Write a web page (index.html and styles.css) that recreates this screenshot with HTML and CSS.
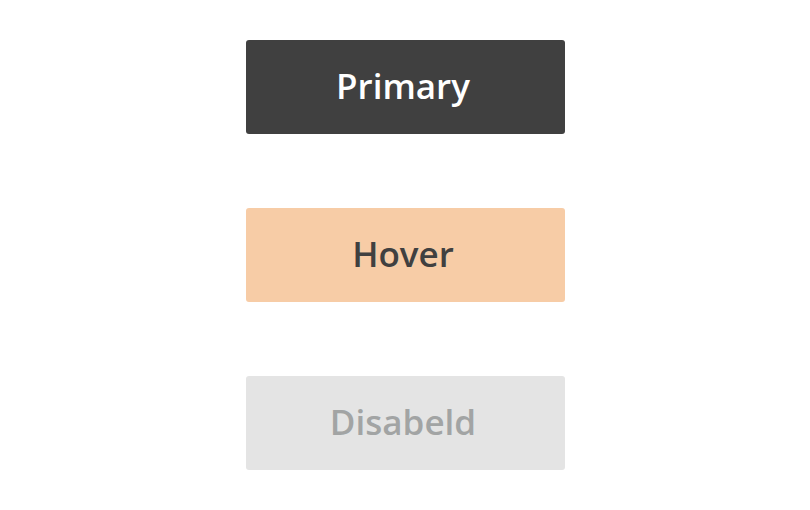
FILE: index.html
```html
<!DOCTYPE html>
<html>
<head>
<meta charset="utf-8">
<link rel="stylesheet" href="styles.css">
</head>
<body>
<div class="stack">
  <button class="btn btn-primary">Primary</button>
  <button class="btn btn-hover">Hover</button>
  <button class="btn btn-disabled" disabled>Disabeld</button>
</div>
</body>
</html>
```
FILE: styles.css
```css
html, body {
  margin: 0;
  padding: 0;
  background: #ffffff;
}
.stack {
  display: flex;
  flex-direction: column;
  align-items: center;
  gap: 74px;
  padding-top: 40px;
}
.btn {
  width: 319px;
  height: 94px;
  border: none;
  border-radius: 3px;
  font-family: "Open Sans", sans-serif;
  font-weight: 600;
  font-size: 35px;
  padding: 0 5px 4px 0;
  margin: 0 0 0 1px;
  display: flex;
  align-items: center;
  justify-content: center;
}
.btn-primary {
  background: #404040;
  color: #ffffff;
}
.btn-hover {
  background: #f7cca6;
  color: #404040;
}
.btn-disabled {
  background: #e4e4e4;
  color: #a2a4a4;
}
```
